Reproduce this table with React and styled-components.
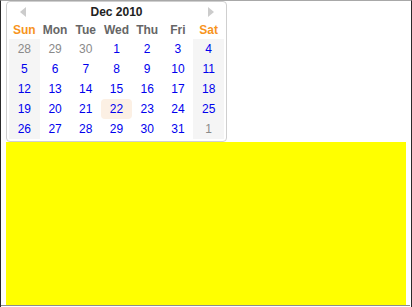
import styled, { createGlobalStyle } from "styled-components";

const Global = createGlobalStyle`
  html, body { margin: 0; padding: 0; background: #fff; }
  * { box-sizing: border-box; }
`;

const Frame = styled.div`
  width: 412px;
  height: 307px;
  border-left: 1px solid #2a2a2a;
  border-right: 1px solid #2a2a2a;
  border-top: 1px solid #a8a8a8;
  padding-left: 5px;
  display: flex;
  flex-direction: column;
  font-family: "Liberation Sans", Arial, sans-serif;
`;

const Calendar = styled.div`
  width: 221px;
  height: 141px;
  border: 1px solid #cfcfcf;
  border-radius: 4px;
  padding: 0 2px;
  background: #fff;
`;

const Header = styled.div`
  height: 19px;
  display: grid;
  grid-template-columns: repeat(7, 1fr);
  align-items: center;
`;

const Title = styled.div`
  grid-column: 2 / 7;
  text-align: center;
  font-size: 12px;
  font-weight: bold;
  color: #222;
`;

const Arrow = styled.span`
  justify-self: center;
  width: 0;
  height: 0;
  border-top: 5px solid transparent;
  border-bottom: 5px solid transparent;
  ${(p) =>
    p.$dir === "left"
      ? "border-right: 6px solid #cccccc; margin-left: -2px;"
      : "border-left: 6px solid #cccccc; margin-left: 4px;"}
`;

const Grid = styled.div`
  display: grid;
  grid-template-columns: repeat(7, 1fr);
`;

const DayName = styled.div`
  height: 18px;
  line-height: 18px;
  text-align: center;
  font-size: 12px;
  font-weight: bold;
  color: ${(p) => (p.$weekend ? "#f7941d" : "#666")};
`;

const Cell = styled.div`
  height: 20px;
  line-height: 20px;
  text-align: center;
  font-size: 12px;
  color: ${(p) => (p.$other ? "#8a8a8a" : "#0000ee")};
  background: ${(p) =>
    p.$today ? "#fcf0e4" : p.$weekend ? "#f5f5f5" : "transparent"};
  border-radius: ${(p) => (p.$today ? "4px" : "0")};
`;

const Yellow = styled.div`
  width: 400px;
  height: 163px;
  background: #ffff00;
`;

const Bottom = styled.div`
  margin-left: -5px;
  width: 409px;
  height: 1px;
  background: #8c8c8c;
`;

const names = ["Sun", "Mon", "Tue", "Wed", "Thu", "Fri", "Sat"];

const days = [28, 29, 30];
for (let i = 1; i <= 31; i++) days.push(i);
days.push(1);

export default function App() {
  return (
    <Frame>
      <Global />
      <Calendar>
        <Header>
          <Arrow $dir="left" />
          <Title>Dec 2010</Title>
          <Arrow $dir="right" />
        </Header>
        <Grid>
          {names.map((n, i) => (
            <DayName key={n} $weekend={i === 0 || i === 6}>
              {n}
            </DayName>
          ))}
          {days.map((d, i) => {
            const col = i % 7;
            const other = i < 3 || i === days.length - 1;
            return (
              <Cell
                key={i}
                $weekend={col === 0 || col === 6}
                $other={other}
                $today={!other && d === 22}
              >
                {d}
              </Cell>
            );
          })}
        </Grid>
      </Calendar>
      <Yellow />
      <Bottom />
    </Frame>
  );
}
